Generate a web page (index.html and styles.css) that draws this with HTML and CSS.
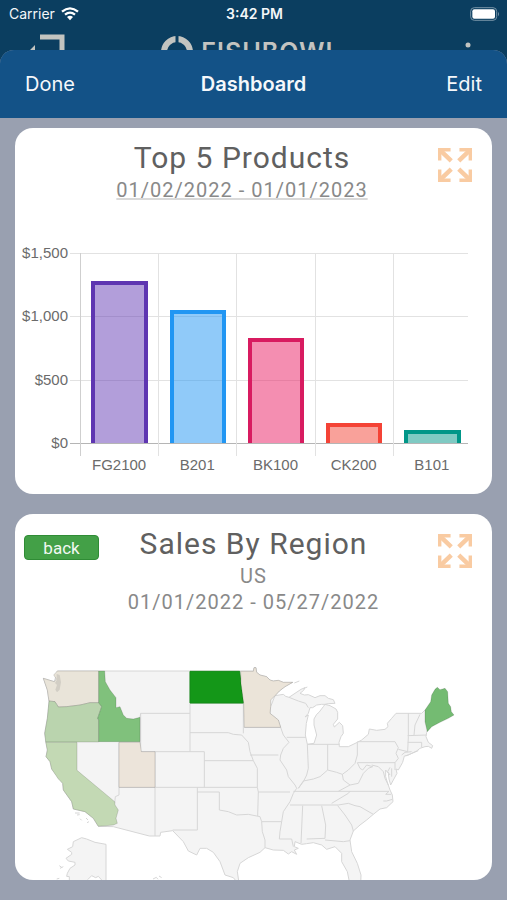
FILE: index.html
```html
<!DOCTYPE html>
<html lang="en">
<head>
<meta charset="utf-8">
<meta name="viewport" content="width=device-width, initial-scale=1">
<title>Dashboard</title>
<link rel="stylesheet" href="styles.css">
</head>
<body>
<div class="status">
  <div class="carrier">
    <span>Carrier</span>
    <svg class="wifi" viewBox="0 0 54 42" aria-hidden="true">
      <path d="M3 14Q27 -6 51 14" /><path d="M12 23Q27 11 42 23" /><path class="solid" d="M18 30Q27 22 36 30L27 40Z" />
    </svg>
  </div>
  <span class="time">3:42 PM</span>
  <svg class="battery" viewBox="0 0 90 42" aria-hidden="true">
    <rect x="2" y="2" width="78" height="38" rx="11" class="shell" />
    <rect x="7" y="7" width="68" height="28" rx="6" fill="#fff" />
    <path d="M84 14q6 7 0 14z" fill="#7592a5" />
  </svg>
</div>
<div class="appbar">
  <svg class="exit" viewBox="0 0 36 34" aria-hidden="true">
    <path d="M11 3H33V31H11" fill="none" stroke="#c3c4c0" stroke-width="5" />
    <path d="M0 17L6 11V16H22V21H6V24Z" fill="#c3c4c0" />
  </svg>
  <div class="brand">
    <svg class="ring" viewBox="0 0 32 32" aria-hidden="true">
      <circle cx="16" cy="16" r="13" fill="none" stroke="#c3c4c0" stroke-width="6" />
      <path d="M16 0V9M16 23V32M0 17H9M23 17H32" stroke="#0b3e60" stroke-width="3" />
    </svg>
    <span>FISHBOWL</span>
  </div>
  <svg class="dots" viewBox="0 0 6 24" aria-hidden="true">
    <circle cx="3" cy="3" r="2.500" /><circle cx="3" cy="11" r="2.500" /><circle cx="3" cy="19" r="2.500" />
  </svg>
</div>
<main class="sheet">
  <header class="bar">
    <button type="button">Done</button>
    <h1>Dashboard</h1>
    <button type="button" class="end">Edit</button>
  </header>
  <div class="cards">
    <section class="card">
      <button type="button" class="expand" aria-label="Expand Top 5 Products">
        <svg viewBox="0 0 100 100"><path d="M5 37V5H37M63 5H95V37M95 63V95H63M37 95H5V63" /><path class="shaft" d="M6 6L39 38M94 6L61 38M94 94L61 62M6 94L39 62" /></svg>
      </button>
      <div class="heading">
        <h2>Top 5 Products</h2>
        <p class="linked">01/02/2022 - 01/01/2023</p>
      </div>
      <div class="chart">
        <div class="scale"><span>$1,500</span><span>$1,000</span><span>$500</span><span>$0</span></div>
        <div class="plot">
          <div class="rules"><i></i><i></i><i></i><i></i></div>
          <div class="col"><div class="bar-box"><div class="value purple" style="height:85.3%"></div></div><span>FG2100</span></div>
          <div class="col"><div class="bar-box"><div class="value blue" style="height:70%"></div></div><span>B201</span></div>
          <div class="col"><div class="bar-box"><div class="value pink" style="height:55.3%"></div></div><span>BK100</span></div>
          <div class="col"><div class="bar-box"><div class="value red" style="height:10.5%"></div></div><span>CK200</span></div>
          <div class="col"><div class="bar-box"><div class="value teal" style="height:6.8%"></div></div><span>B101</span></div>
        </div>
      </div>
    </section>
    <section class="card">
      <button type="button" class="back">back</button>
      <button type="button" class="expand" aria-label="Expand Sales By Region">
        <svg viewBox="0 0 100 100"><path d="M5 37V5H37M63 5H95V37M95 63V95H63M37 95H5V63" /><path class="shaft" d="M6 6L39 38M94 6L61 38M94 94L61 62M6 94L39 62" /></svg>
      </button>
      <h2>Sales By Region</h2>
      <p>US</p>
      <p>01/01/2022 - 05/27/2022</p>
      <svg class="map" viewBox="0 0 1431 675" role="img" aria-label="Map of sales by state">
        <!-- mainland -->
        <path class="land" d="M127 48H715L717 38L723 38L725 52L735 60L755 65L765 75L775 78L790 76L805 82L833 82L810 95L793 108L780 122L805 118L812 124L822 127L840 115L858 103L870 98L866 106L855 115L868 120L880 119L900 128L915 122L930 122L940 130L955 134L960 145L940 146L930 148L920 148L905 150L893 158L885 158L880 175L870 186L880 180L874 205L871 240L877 268L897 265L905 240L897 210L897 192L905 178L912 172L925 155L930 148L945 152L963 162L968 172L968 192L955 208L958 216L973 202L983 212L985 235L978 245L972 262L973 275L1000 275L1027 262L1040 255L1060 238L1063 222L1085 226L1110 223L1119 215L1117 205L1130 190L1143 175H1220L1230 165L1250 180L1235 232L1233 245L1240 262L1253 272L1250 280L1240 274L1230 275L1215 280L1205 288L1180 300L1168 303L1163 322L1150 345L1143 342L1146 355L1135 375L1127 390L1122 372L1120 355L1112 345L1112 365L1118 385L1125 405L1132 420L1134 440L1115 458L1095 462L1075 478L1055 495L1035 510L1015 528L1005 555L1010 590L1027 625L1038 660L1037 690H1005L997 650L980 620V595L960 575L935 583L920 570L895 563L875 566L860 568L840 560L838 575L850 580L838 585L845 598L830 590L820 597L805 586L775 585L750 578L735 592L700 608L675 625L667 650L673 690L655 668L630 660L615 620L595 592L575 580H555L545 600L520 588L505 560L473 527L437 532L435 543H403L295 515L250 514L235 490L210 470L175 462L170 440L145 405L143 385L110 342L105 320L93 305L97 285L89 235L97 190L102 140L97 105L85 70L118 80Z" />
        <!-- Alaska, Hawaii and small islands -->
        <path class="land" d="M273 690V568L240 562L215 552L200 548L175 560L173 575L157 583L170 592L170 598L153 610L160 618L180 622V630L165 640L157 655L155 664L163 665V690M218 674L230 662L242 668L250 664L260 675" />
        <path class="line" d="M135 640l10 -5M133 632l8 6M125 672l8 -2M180 474h14M186 480l8 -1M195 491l5 5M213 489l6 6M216 503l6 -3M414 672l10 -5 5 6M432 663l8 5M838 84l15 -6M865 101l12 -5M1172 303l38 -16" />
        <!-- state borders -->
        <path class="line" d="M312 262V420L301 425L299 445M312 397H727M420 397V543M525 48V290M377 175H525M375 187L377 175V290H568V397M420 290V397M547 397V525H473M547 411H613V465L640 470L665 480L700 478L735 485L740 500L742 530L750 555V578M568 317H715M525 233H640L655 238L680 240L700 262L705 290L715 317L727 340V397L730 411L728 483M525 145H685V235M688 217H797L805 240L822 262L805 280L797 300L795 315L815 345L820 365L840 390L845 400L835 415L825 440L805 470L800 500L795 530L793 552H830L835 575M705 300H790M780 122L767 155L765 175L790 195L797 217M730 411H825M740 500H800" />
        <path class="line" d="M822 127L850 138L872 145L880 158M815 247H873M877 268H973M877 268L880 340L875 360L865 380L850 400L865 378L895 372L915 365L938 345L965 352L982 358L1000 345L1020 325L1027 300V262M938 268V345M835 409H1122M825 450H970L1000 445L1020 452L1035 455L1075 478M970 409L1005 390L1030 385L1045 355L1060 340L1073 335L1055 330L1043 345L1035 340L1027 323M982 358L985 375L1005 390M1027 260H1140L1150 278L1143 295L1150 310L1140 323H1027M1070 330L1090 335L1105 350L1110 370L1120 390M1180 175V245L1178 290L1150 283M1215 178L1200 210L1197 240M1178 242L1235 240M1178 262H1220V277M1140 323V345M863 452L858 565M920 452L932 510L930 550L875 552M930 555L985 560L1005 557M968 452L990 480L1010 510L1015 528M950 445L975 430L1000 415L1005 409" />
        <path class="line" d="M1125 337L1118 350L1125 360M1130 340L1130 365M1122 409L1112 418H1128M1132 433L1115 438H1105M1160 300L1170 292L1190 290" />
        <!-- states with sales -->
        <path class="state" fill="#e9e4d9" d="M127 48H251V143H225L195 150L155 155L130 156L120 140L102 138L97 105L85 70L118 80L124 72L116 60Z" />
        <path fill="#d2cec5" d="M125 57l9 3 4 22 -4 22 -8 8 -5 -8 5 -14 -6 -6 5 -8z" />
        <path class="state" fill="#bad4ae" d="M102 138L120 140L130 156L155 155L195 150L225 143H251L260 155L248 190L251 195V261H92L89 235L97 190Z" />
        <path class="state" fill="#c3d9b4" d="M92 262H186V346L299 440L300 450L310 465L303 490L307 505L295 510L250 514L235 490L210 470L175 462L170 440L145 405L143 385L130 372L110 342L105 320L93 305L97 285Z" />
        <path class="state" fill="#80c17c" d="M251 48H269L271 80L285 105L303 128V158L315 155L325 180L335 190L355 192L375 187V260H251V195L248 190L260 155L251 143Z" />
        <path class="state" fill="#ece4da" d="M312 262H375L379 290H420V397H312Z" />
        <path fill="#149718" stroke="#128a16" stroke-width="3" d="M525 49H674L678 85L686 144H525Z" />
        <path class="state" fill="#ebe4d9" d="M677 49H715L717 38H723L725 52L735 60L755 65L765 75L775 78L790 76L805 82L833 82L810 95L793 108L780 122L767 135V155L765 175L790 195L797 217H688L686 144L678 85Z" />
        <path class="state" fill="#74bb72" d="M1230 165L1247 140L1250 120L1260 103L1267 97L1275 104L1290 100L1298 110L1300 145L1307 155L1309 170L1317 180L1300 190L1275 202L1250 215L1237 230L1230 200Z" />
      </svg>
    </section>
  </div>
</main>
</body>
</html>
```
FILE: styles.css
```css
* { box-sizing: border-box; }

body {
  margin: 0;
  min-height: 100vh;
  display: flex;
  flex-direction: column;
  background: #0b3e60;
  font-family: Roboto, sans-serif;
  color: #606060;
}

button {
  margin: 0;
  padding: 0;
  border: 0;
  background: none;
  color: inherit;
  font: inherit;
}

svg { display: block; }

/* Device status bar */
.status {
  display: grid;
  grid-template-columns: 1fr auto 1fr;
  align-items: center;
  height: 28px;
  padding: 0 7px 0 9px;
  color: #f4f7f9;
  font: 14px/20px Inter, sans-serif;
}
.carrier { display: flex; align-items: center; gap: 6px; }
.wifi { width: 18px; height: 14px; fill: none; stroke: #fff; stroke-width: 7; }
.wifi .solid { fill: #fff; stroke: none; }
.time { font-weight: 600; }
.battery { width: 30px; height: 14px; justify-self: end; }
.shell { fill: none; stroke: #7592a5; stroke-width: 3; }

/* App bar, partly covered by the sheet */
.appbar {
  display: flex;
  justify-content: space-between;
  align-items: flex-start;
  height: 22px;
  padding: 6px 36px 0 29px;
  overflow: hidden;
}
.exit { width: 36px; height: 34px; }
.brand {
  display: flex;
  align-items: flex-start;
  gap: 8px;
  margin-right: 28px;
  padding-top: 2px;
  color: #c3c4c0;
  font: 600 25px/32px Inter, sans-serif;
  letter-spacing: 1px;
}
.ring { width: 32px; height: 32px; }
.dots { width: 6px; height: 24px; margin-top: 8px; fill: #c3c4c0; }

/* Sheet */
.sheet {
  flex: 1;
  border-radius: 14px 14px 0 0;
  overflow: hidden;
  background: #99a0b0;
}
.bar {
  display: grid;
  grid-template-columns: 1fr auto 1fr;
  align-items: center;
  height: 68px;
  padding: 0 25px;
  background: #135287;
  color: #f5f8fb;
  font: 20px/24px Inter, sans-serif;
}
.bar button { justify-self: start; }
.bar .end { justify-self: end; }
.bar h1 { margin: 0; font-size: 20px; font-weight: 600; }

.cards { display: flex; flex-direction: column; gap: 20px; padding: 10px 15px 20px; }
.card {
  position: relative;
  padding-top: 13px;
  border-radius: 18px;
  background: #fff;
  overflow: hidden;
  text-align: center;
}
.heading { padding-right: 23px; }
.card h2 {
  margin: 0 0 2px;
  font-size: 30px;
  font-weight: 400;
  line-height: 34px;
  letter-spacing: 1px;
}
.card p {
  margin: 0;
  color: #898989;
  font-size: 20px;
  line-height: 26px;
  letter-spacing: 1px;
}
.linked {
  text-decoration: underline 2px #d9d9d9;
  text-underline-offset: 1px;
  text-decoration-skip-ink: none;
}
.expand { position: absolute; top: 20px; right: 20px; width: 34px; height: 34px; }
.expand svg { width: 34px; height: 34px; fill: none; stroke: #f9cba2; stroke-width: 10; }
.expand .shaft { stroke-width: 13; }
.back {
  position: absolute;
  top: 21px;
  left: 9px;
  width: 75px;
  height: 25px;
  border: 1px solid #2f8c35;
  border-radius: 4px;
  background: #43a047;
  color: #f2f8f2;
  font-size: 17px;
  line-height: 22px;
}

/* Bar chart */
.chart {
  display: grid;
  grid-template-columns: 65px 1fr;
  padding: 50px 21px 21px 0;
  color: #6b6b6b;
  font: 15px/16px "Liberation Sans", sans-serif;
}
.scale {
  display: flex;
  flex-direction: column;
  justify-content: space-between;
  align-items: flex-end;
  height: 206px;
  margin-top: -8px;
  padding-right: 12px;
}
.plot { position: relative; display: grid; grid-template-columns: repeat(5, 1fr); }
.rules {
  position: absolute;
  top: 0;
  left: -10px;
  right: 3px;
  height: 191px;
  display: flex;
  flex-direction: column;
  justify-content: space-between;
}
.rules i { height: 1px; background: #e2e2e2; }
.rules i:last-child { background: #b5b5b5; }
.bar-box {
  position: relative;
  display: flex;
  justify-content: center;
  align-items: flex-end;
  height: 203px;
  padding-bottom: 13px;
  border-left: 1px solid #e2e2e2;
}
.value { width: 73%; border: 4px solid; border-bottom: 0; }
.purple { border-color: #5e35b1; background: #5e35b17a; }
.blue { border-color: #2196f3; background: #2196f380; }
.pink { border-color: #d81b60; background: #e91e6380; }
.red { border-color: #f44336; background: #f4433680; }
.teal { border-color: #009688; background: #00968880; }
.col:nth-child(2) .bar-box { border-color: #cfcfcf; }
.col span { display: block; margin-top: 1px; }

/* Region map */
.map { width: 100%; height: auto; margin-top: 40px; }
.land { fill: #f4f4f4; stroke: #d6d6d6; stroke-width: 3; stroke-linejoin: round; }
.line { fill: none; stroke: #d6d6d6; stroke-width: 3; stroke-linejoin: round; }
.state { stroke: #00000022; stroke-width: 3; stroke-linejoin: round; }
```
